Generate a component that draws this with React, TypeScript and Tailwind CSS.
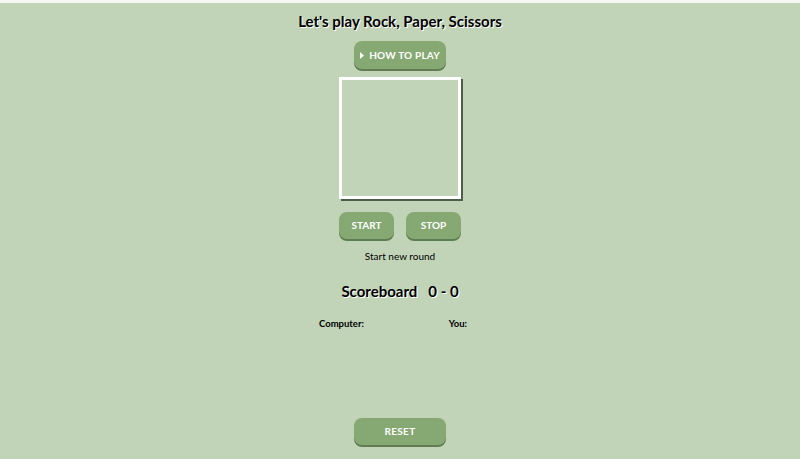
export default function App() {
  return (
    <div
      className="w-[800px] h-[459px] bg-[#c1d4b7] border-t-[3px] border-[#f4f7f2] flex flex-col items-center text-black"
      style={{ fontFamily: 'Lato, "Open Sans", sans-serif' }}
    >
      <h1 className="mt-[9px] text-[15px] leading-[18px] font-bold [text-shadow:1px_1px_0_#ffffff]">
        Let's play Rock, Paper, Scissors
      </h1>

      <button className="mt-[11px] w-[92px] h-[28px] rounded-[8px] bg-[#86a873] shadow-[0_2px_0_#5f7d50] text-white text-[10px] font-bold tracking-[0.2px] flex items-center justify-center gap-[5px]">
        <svg width="4" height="7" viewBox="0 0 4 7">
          <path d="M0 0 L4 3.5 L0 7 Z" fill="#ffffff" />
        </svg>
        HOW TO PLAY
      </button>

      <div className="mt-[8px] w-[122px] h-[122px] border-[3px] border-white shadow-[2px_2px_0_#4f5c48]" />

      <div className="mt-[13px] flex gap-[12px]">
        <button className="w-[55px] h-[27px] rounded-[8px] bg-[#86a873] shadow-[0_2px_0_#5f7d50] text-white text-[10px] font-bold">
          START
        </button>
        <button className="w-[55px] h-[27px] rounded-[8px] bg-[#86a873] shadow-[0_2px_0_#5f7d50] text-white text-[10px] font-bold">
          STOP
        </button>
      </div>

      <p className="mt-[11px] text-[10px] leading-[12px]">Start new round</p>

      <h2 className="mt-[20px] text-[15px] leading-[18px] font-bold [text-shadow:1px_1px_0_#ffffff] flex gap-[11px]">
        <span>Scoreboard</span>
        <span>0 - 0</span>
      </h2>

      <div className="mt-[18px] w-[162px] flex justify-between text-[9.5px] font-bold leading-[11px]">
        <span>Computer:</span>
        <span className="mr-[14px]">You:</span>
      </div>

      <button className="mt-[89px] w-[92px] h-[27px] rounded-[8px] bg-[#86a873] shadow-[0_2px_0_#5f7d50] text-white text-[10px] font-bold tracking-[0.3px]">
        RESET
      </button>
    </div>
  );
}
